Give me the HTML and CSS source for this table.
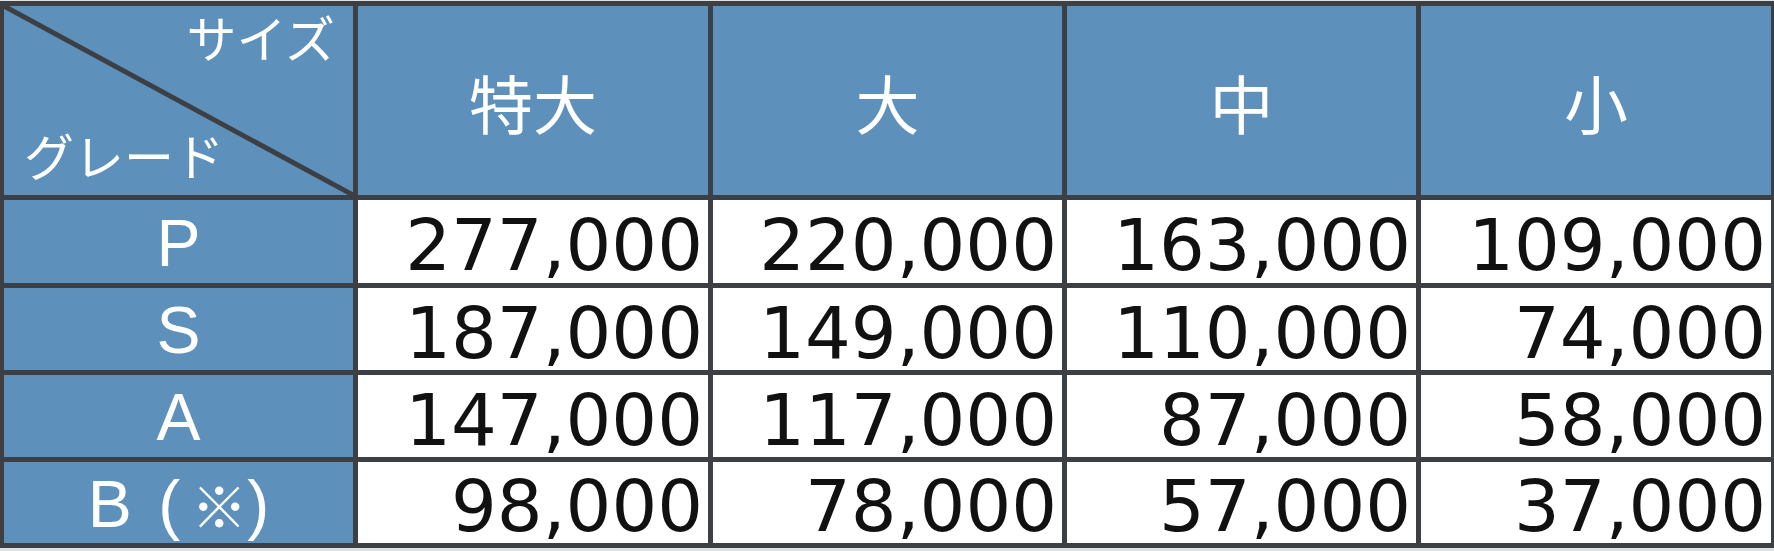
FILE: index.html
```html
<!DOCTYPE html>
<html lang="ja">
<head>
<meta charset="utf-8">
<title>価格表</title>
<link rel="stylesheet" href="styles.css">
</head>
<body>
<div class="table">
  <div class="cell corner">
    <svg class="diag" viewBox="0 0 100 100" preserveAspectRatio="none" aria-hidden="true">
      <line x1="-1" y1="-1" x2="101" y2="101" vector-effect="non-scaling-stroke"/>
    </svg>
    <span class="corner-top">サイズ</span>
    <span class="corner-bottom">グレード</span>
  </div>
  <div class="cell head">特大</div>
  <div class="cell head">大</div>
  <div class="cell head">中</div>
  <div class="cell head">小</div>

  <div class="cell label">P</div>
  <div class="cell num">277,000</div>
  <div class="cell num">220,000</div>
  <div class="cell num">163,000</div>
  <div class="cell num">109,000</div>

  <div class="cell label">S</div>
  <div class="cell num">187,000</div>
  <div class="cell num">149,000</div>
  <div class="cell num">110,000</div>
  <div class="cell num">74,000</div>

  <div class="cell label">A</div>
  <div class="cell num">147,000</div>
  <div class="cell num">117,000</div>
  <div class="cell num">87,000</div>
  <div class="cell num">58,000</div>

  <div class="cell label">B (<span class="kome">※</span>)</div>
  <div class="cell num">98,000</div>
  <div class="cell num">78,000</div>
  <div class="cell num">57,000</div>
  <div class="cell num">37,000</div>
</div>
</body>
</html>
```

FILE: styles.css
```css
html, body {
  margin: 0;
  padding: 0;
  background: #dfe1e2;
  overflow: hidden;
}

.table {
  display: grid;
  grid-template-columns: 349px 350px 349px 349px 350px;
  grid-template-rows: 189px 83px 82px 82px 81px;
  gap: 5px;
  padding: 5px;
  width: max-content;
  background: #3c3f43;
  margin: 1px 0 0 -1px;
}

.cell {
  display: flex;
  align-items: center;
  box-sizing: border-box;
}

.head, .label, .corner {
  background: #5d91bb;
  color: #ffffff;
  font-family: "Noto Sans CJK JP", sans-serif;
}

.head {
  justify-content: center;
  font-size: 64px;
  line-height: 1;
}

.label {
  justify-content: center;
  font-family: "Liberation Sans", "Noto Sans CJK JP", sans-serif;
  font-size: 66px;
  line-height: 1;
  padding-top: 2px;
  white-space: pre;
  word-spacing: 8px;
}

.kome {
  font-family: "Noto Sans CJK JP", sans-serif;
  font-size: 56px;
  margin: 0 0 0 11px;
}

.num {
  background: #ffffff;
  color: #111111;
  font-family: "DejaVu Sans", Verdana, sans-serif;
  font-size: 72px;
  line-height: 72px;
  justify-content: flex-end;
  padding: 7px 5px 0 0;
}

.corner {
  position: relative;
  flex-direction: column;
  align-items: stretch;
  justify-content: space-between;
  font-size: 50px;
  line-height: 1;
  padding: 5px 18px 16px 20px;
}

.corner-top {
  text-align: right;
}

.corner-bottom {
  text-align: left;
}

.diag {
  position: absolute;
  left: 0;
  top: 0;
  width: 100%;
  height: 100%;
  overflow: visible;
}

.diag line {
  stroke: #3c3f43;
  stroke-width: 5px;
}
```
